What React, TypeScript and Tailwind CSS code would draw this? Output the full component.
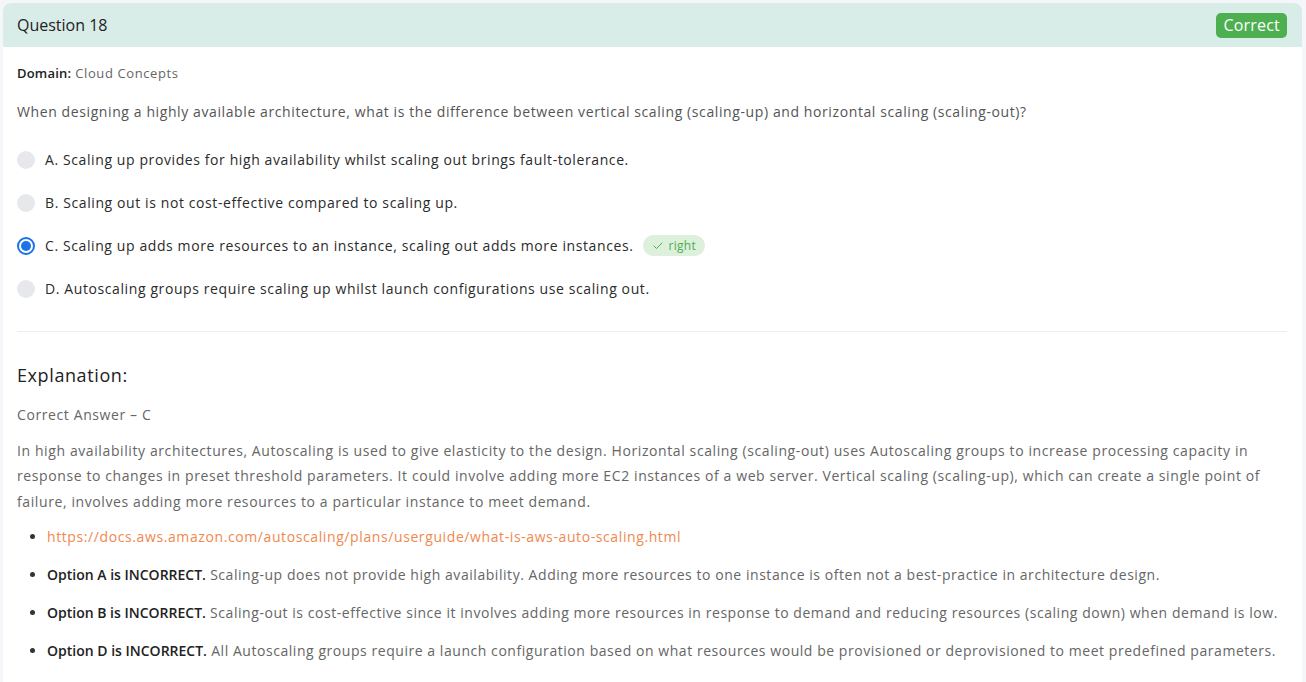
import { Check } from "lucide-react";

const options = [
    { key: "A", text: "Scaling up provides for high availability whilst scaling out brings fault-tolerance." },
    { key: "B", text: "Scaling out is not cost-effective compared to scaling up." },
    { key: "C", text: "Scaling up adds more resources to an instance, scaling out adds more instances.", picked: true },
    { key: "D", text: "Autoscaling groups require scaling up whilst launch configurations use scaling out." },
];

const notes = [
    {
        head: "Option A is INCORRECT.",
        body: "Scaling-up does not provide high availability. Adding more resources to one instance is often not a best-practice in architecture design.",
    },
    {
        head: "Option B is INCORRECT.",
        body: "Scaling-out is cost-effective since it involves adding more resources in response to demand and reducing resources (scaling down) when demand is low.",
    },
    {
        head: "Option D is INCORRECT.",
        body: "All Autoscaling groups require a launch configuration based on what resources would be provisioned or deprovisioned to meet predefined parameters.",
    },
];

export default function App() {
    return (
        <div
            className="min-h-screen bg-[#f4f6f9] pt-[3px] pl-[3px] pr-[4px] tracking-[0.6px]"
            style={{ fontFamily: '"Open Sans", "Liberation Sans", sans-serif' }}
        >
            <div className="bg-white rounded-t-lg h-[679px] overflow-hidden">
                <div className="flex items-center justify-between h-[44px] bg-[#d9ede8] pl-[14px] pr-[15px]">
                    <h2 className="text-[16px] text-[#222] tracking-normal">Question 18</h2>
                    <span className="bg-[#4caf50] text-white text-[16px] leading-[25px] px-[7px] rounded-[5px] tracking-[0.2px]">Correct</span>
                </div>

                <div className="px-[14px] pr-[15px]">
                    <p className="mt-[17px] text-[13px] text-[#666]">
                        <span className="font-semibold text-[#222] tracking-[0.2px]">Domain:</span> Cloud Concepts
                    </p>
                    <p className="mt-[17px] text-[14px] text-[#555]">
                        When designing a highly available architecture, what is the difference between vertical scaling (scaling-up) and horizontal scaling (scaling-out)?
                    </p>

                    <div className="mt-[27px] flex flex-col gap-[21px] pb-[31px] border-b border-[#eceef1]">
                        {options.map((o) => (
                            <div key={o.key} className="flex items-center h-[22px]">
                                {o.picked ? (
                                    <span className="w-[18px] h-[18px] rounded-full border-[2px] border-[#1a73e8] flex items-center justify-center">
                                        <span className="w-[10px] h-[10px] rounded-full bg-[#1a73e8]" />
                                    </span>
                                ) : (
                                    <span className="w-[18px] h-[18px] rounded-full bg-[#e6e8eb]" />
                                )}
                                <span className="ml-[10px] text-[14px] text-[#2b2b2b] font-medium">
                                    {o.key}. {o.text}
                                </span>
                                {o.picked && (
                                    <span className="ml-[10px] flex items-center gap-[4px] bg-[#dcf0dc] text-[#4caf50] text-[12px] rounded-full px-[9px] h-[21px] tracking-[0.3px]">
                                        <Check size={12} strokeWidth={2} />
                                        right
                                    </span>
                                )}
                            </div>
                        ))}
                    </div>

                    <h3 className="mt-[30px] text-[18px] font-medium text-[#222]">Explanation:</h3>
                    <p className="mt-[15px] text-[14px] text-[#666]">Correct Answer – C</p>
                    <p className="mt-[13px] text-[14px] leading-[25.5px] text-[#666]">
                        In high availability architectures, Autoscaling is used to give elasticity to the design. Horizontal scaling (scaling-out) uses Autoscaling groups to increase processing capacity in response to changes in preset threshold parameters. It could involve adding more EC2 instances of a web server. Vertical scaling (scaling-up), which can create a single point of failure, involves adding more resources to a particular instance to meet demand.
                    </p>

                    <ul className="mt-[12px] pl-[30px] -mr-[10px] list-disc flex flex-col gap-[16px] text-[14px] leading-[22px] text-[#666] marker:text-[#333] tracking-[0.55px]">
                        <li>
                            <a className="text-[#f0884f] tracking-[0.6px]" href="#">https://docs.aws.amazon.com/autoscaling/plans/userguide/what-is-aws-auto-scaling.html</a>
                        </li>
                        {notes.map((n) => (
                            <li key={n.head} className="whitespace-nowrap">
                                <span className="font-semibold text-[#222] tracking-normal">{n.head}</span> {n.body}
                            </li>
                        ))}
                    </ul>
                </div>
            </div>
        </div>
    );
}
